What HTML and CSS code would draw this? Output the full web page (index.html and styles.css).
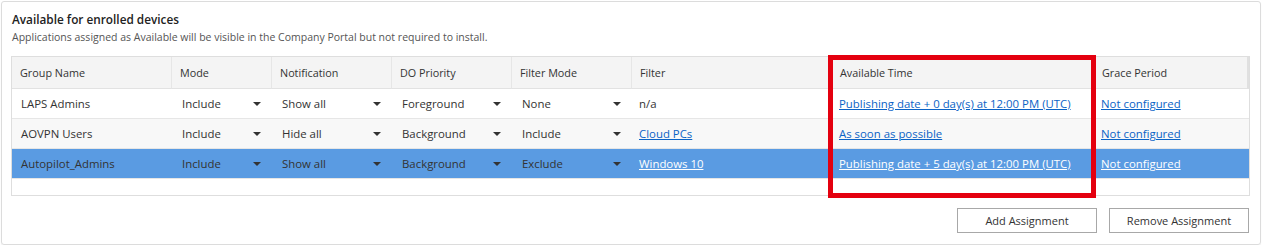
FILE: index.html
```html
<!DOCTYPE html>
<html>
<head>
<meta charset="utf-8">
<link rel="stylesheet" href="styles.css">
</head>
<body>
<div class="panel">
  <h2 class="title">Available for enrolled devices</h2>
  <p class="desc">Applications assigned as Available will be visible in the Company Portal but not required to install.</p>
  <div class="grid-wrap">
    <table class="grid">
      <colgroup>
        <col class="c-name"><col class="c-mode"><col class="c-notif"><col class="c-do"><col class="c-fmode"><col class="c-filter"><col class="c-time"><col class="c-grace">
      </colgroup>
      <thead>
        <tr>
          <th>Group Name</th><th>Mode</th><th>Notification</th><th>DO Priority</th><th>Filter Mode</th><th>Filter</th><th>Available Time</th><th>Grace Period</th>
        </tr>
      </thead>
      <tbody>
        <tr>
          <td class="name">LAPS Admins</td>
          <td><div class="dd"><span>Include</span><svg class="arrow" width="8" height="4" viewBox="0 0 8 4"><polygon points="0,0 8,0 4,4"/></svg></div></td>
          <td><div class="dd"><span>Show all</span><svg class="arrow" width="8" height="4" viewBox="0 0 8 4"><polygon points="0,0 8,0 4,4"/></svg></div></td>
          <td><div class="dd"><span>Foreground</span><svg class="arrow" width="8" height="4" viewBox="0 0 8 4"><polygon points="0,0 8,0 4,4"/></svg></div></td>
          <td><div class="dd"><span>None</span><svg class="arrow" width="8" height="4" viewBox="0 0 8 4"><polygon points="0,0 8,0 4,4"/></svg></div></td>
          <td class="plain">n/a</td>
          <td class="plain"><a class="link" href="#">Publishing date + 0 day(s) at 12:00 PM (UTC)</a></td>
          <td class="plain"><a class="link" href="#">Not configured</a></td>
        </tr>
        <tr class="alt">
          <td class="name">AOVPN Users</td>
          <td><div class="dd"><span>Include</span><svg class="arrow" width="8" height="4" viewBox="0 0 8 4"><polygon points="0,0 8,0 4,4"/></svg></div></td>
          <td><div class="dd"><span>Hide all</span><svg class="arrow" width="8" height="4" viewBox="0 0 8 4"><polygon points="0,0 8,0 4,4"/></svg></div></td>
          <td><div class="dd"><span>Background</span><svg class="arrow" width="8" height="4" viewBox="0 0 8 4"><polygon points="0,0 8,0 4,4"/></svg></div></td>
          <td><div class="dd"><span>Include</span><svg class="arrow" width="8" height="4" viewBox="0 0 8 4"><polygon points="0,0 8,0 4,4"/></svg></div></td>
          <td class="plain"><a class="link" href="#">Cloud PCs</a></td>
          <td class="plain"><a class="link" href="#">As soon as possible</a></td>
          <td class="plain"><a class="link" href="#">Not configured</a></td>
        </tr>
        <tr class="selected">
          <td class="name">Autopilot_Admins</td>
          <td><div class="dd"><span>Include</span><svg class="arrow" width="8" height="4" viewBox="0 0 8 4"><polygon points="0,0 8,0 4,4"/></svg></div></td>
          <td><div class="dd"><span>Show all</span><svg class="arrow" width="8" height="4" viewBox="0 0 8 4"><polygon points="0,0 8,0 4,4"/></svg></div></td>
          <td><div class="dd"><span>Background</span><svg class="arrow" width="8" height="4" viewBox="0 0 8 4"><polygon points="0,0 8,0 4,4"/></svg></div></td>
          <td><div class="dd"><span>Exclude</span><svg class="arrow" width="8" height="4" viewBox="0 0 8 4"><polygon points="0,0 8,0 4,4"/></svg></div></td>
          <td class="plain"><a class="link" href="#">Windows 10</a></td>
          <td class="plain"><a class="link" href="#">Publishing date + 5 day(s) at 12:00 PM (UTC)</a></td>
          <td class="plain"><a class="link" href="#">Not configured</a></td>
        </tr>
        <tr class="filler"><td colspan="8"></td></tr>
      </tbody>
    </table>
    <div class="highlight"></div>
  </div>
  <div class="actions">
    <button class="btn" type="button">Add Assignment</button>
    <button class="btn" type="button">Remove Assignment</button>
  </div>
</div>
</body>
</html>
```

FILE: styles.css
```css
* { box-sizing: border-box; }
html, body { margin: 0; padding: 0; background: #ffffff; }
body {
  font-family: "Open Sans", "Noto Sans", sans-serif;
  font-size: 11px;
  color: #333333;
}
.panel {
  margin: 1px 0 0 1px;
  width: 1260px;
  height: 244px;
  border: 1px solid #dcdcdc;
  border-radius: 3px;
  box-shadow: 0 1px 1px rgba(0,0,0,0.08);
  padding: 9px 10px 10px 9px;
  display: flex;
  flex-direction: column;
}
.title {
  margin: 0;
  font-size: 11.8px;
  line-height: 16px;
  font-weight: 600;
  color: #222;
  padding-left: 1px;
}
.desc {
  margin: 3px 0 0 0;
  font-size: 10.5px;
  line-height: 15px;
  color: #555;
  padding-left: 1px;
}
.grid-wrap {
  position: relative;
  margin-top: 11px;
  width: 1239px;
}
.grid {
  width: 1239px;
  table-layout: fixed;
  border-collapse: separate;
  border-spacing: 0;
  border: 1px solid #dedede;
}
.c-name { width: 160px; }
.c-mode { width: 100px; }
.c-notif { width: 120px; }
.c-do { width: 120px; }
.c-fmode { width: 120px; }
.c-filter { width: 200px; }
.c-time { width: 262px; }
.c-grace { width: auto; }
.grid th {
  background: #f4f4f4;
  font-weight: 400;
  font-size: 10.8px;
  text-align: left;
  height: 32px;
  padding: 0 8px;
  border-bottom: 1px solid #e2e2e2;
  border-right: 1px solid #e6e6e6;
  color: #333;
  white-space: nowrap;
}
.grid th:last-child { border-right: 2px solid #e0e0e0; }
.grid td {
  height: 30px;
  padding: 0 10px;
  font-size: 11.4px;
  border-bottom: 1px solid #e6e6e6;
  white-space: nowrap;
  overflow: hidden;
  vertical-align: middle;
}
.grid td.name { padding-left: 9px; }
.grid td.plain { padding-left: 7px; }
.grid tr.alt td { background: #f8f8f8; }
.grid tr.selected td { background: #5a9be2; }
.grid tr.filler td { height: 16px; border-bottom: none; background: #fff; }
.dd {
  display: flex;
  align-items: center;
  justify-content: space-between;
  padding-right: 1px;
}
.arrow { fill: #333; flex: none; }
.link { color: #0b63c6; text-decoration: underline; }
.selected .link { color: #ffffff; }
.highlight {
  position: absolute;
  left: 817px;
  top: -1px;
  width: 268px;
  height: 143px;
  border: 5px solid #e4000f;
  pointer-events: none;
}
.actions {
  margin-top: 12px;
  display: flex;
  justify-content: flex-end;
  gap: 12px;
  padding-right: 1px;
}
.btn {
  width: 140px;
  height: 25px;
  background: #ffffff;
  border: 1px solid #a8a8a8;
  border-radius: 0;
  font-family: "Open Sans", "Noto Sans", sans-serif;
  font-size: 11px;
  color: #333;
  padding: 0;
}
```
